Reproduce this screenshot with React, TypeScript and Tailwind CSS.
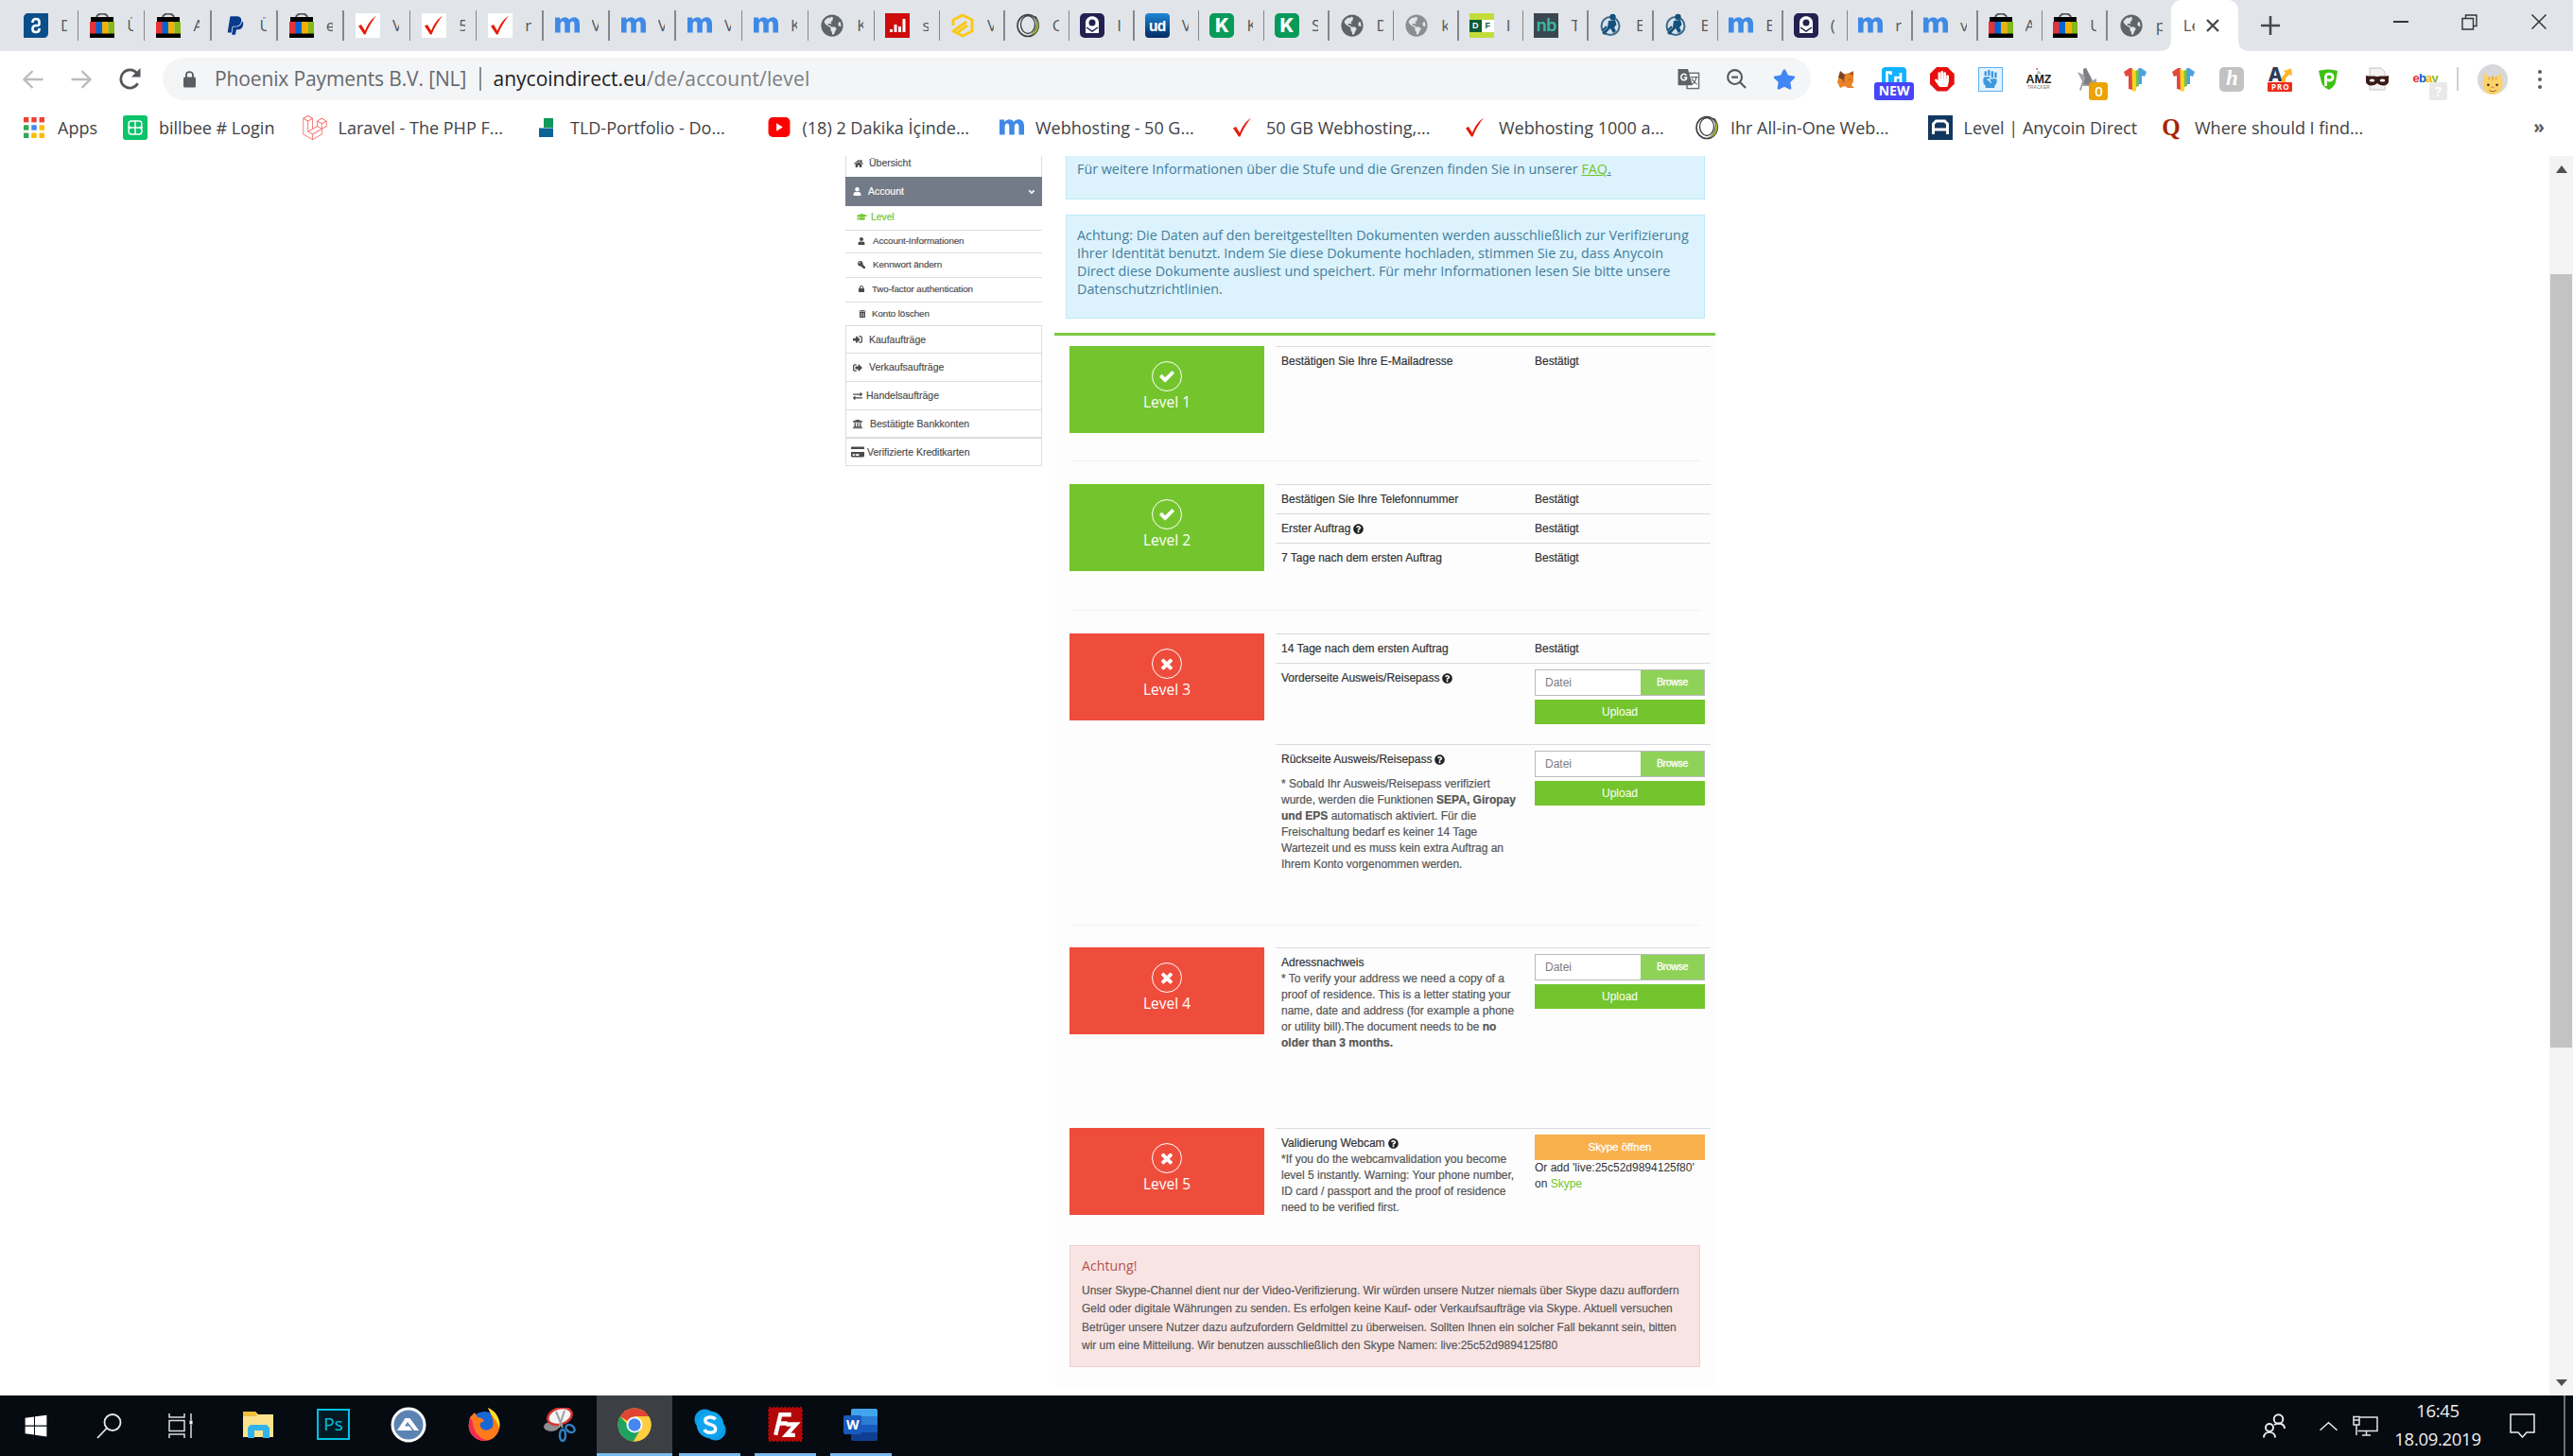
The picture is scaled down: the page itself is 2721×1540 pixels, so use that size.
import React from "react";
import {
  FaLaravel,
  FaPaypal,
  FaHome,
  FaUser,
  FaGraduationCap,
  FaKey,
  FaLock,
  FaTrashAlt,
  FaUniversity,
  FaCreditCard,
  FaExchangeAlt,
  FaSignInAlt,
  FaSignOutAlt,
  FaQuestionCircle,
  FaAngleDown,
  FaStar,
  FaHandPaper,
  FaGlobeAmericas,
  FaWindows,
  FaFistRaised,
} from "react-icons/fa";

type Kids = { children?: React.ReactNode };

/* ---------- small site logos ---------- */

const Ebay = () => (
  <svg viewBox="0 0 26 26" className="h-[26px] w-[26px]">
    <path d="M7 5C7 -1 19 -1 19 5" fill="none" stroke="#555" strokeWidth="2" />
    <rect x="1" y="4" width="24" height="6" fill="#000" />
    <rect x="0" y="9" width="7" height="13" fill="#e53238" />
    <rect x="6.500" y="9" width="6.500" height="13" fill="#0064d2" />
    <rect x="13" y="9" width="6.500" height="13" fill="#f5af02" />
    <rect x="19.500" y="9" width="6.500" height="13" fill="#86b817" />
    <rect x="0" y="21.500" width="26" height="4.500" fill="#000" />
  </svg>
);

const Tick = ({ boxed = false }: { boxed?: boolean }) => (
  <svg viewBox="0 0 26 26" className="h-[26px] w-[26px]">
    {boxed && <rect width="26" height="26" fill="#fff" />}
    <path d="M3 13.500L6 12L10 18.500C13 11 17 6 22 2.500C17 9 13 16 10.500 22.500H9Z" fill="#e51c0a" />
  </svg>
);

const LetterM = () => (
  <svg viewBox="0 0 26 26" className="h-[26px] w-[26px]">
    <path
      d="M0 4.500H5L5.500 7C8 3 13.500 3.500 15 7C18 2.500 26 3 26 11V20.500H20.500V12C20.500 7 15.800 7.500 15.800 12V20.500H10.300V12C10.300 7 5.600 7.500 5.600 12V20.500H0Z"
      fill="#3f8ae6"
    />
  </svg>
);

const Globe = ({ light = false }: { light?: boolean }) => (
  <span className={light ? "text-[#8c8f92]" : "text-[#5f6469]"}>
    <FaGlobeAmericas className="h-[24px] w-[24px]" />
  </span>
);

const Two = () => (
  <svg viewBox="0 0 26 26" className="h-[26px] w-[26px]">
    <path d="M5 0H26V21C26 24 24 26 21 26H0V5C0 2 2 0 5 0Z" fill="#0b4f8a" />
    <path
      d="M9.500 10V9C9.500 5 16.500 5 16.500 9V11C16.500 13.500 14.500 13 13 13C11 13 9.500 14 9.500 16V17C9.500 21 16.500 21 16.500 17V16"
      fill="none"
      stroke="#fff"
      strokeWidth="2.600"
    />
  </svg>
);

const Bars = () => (
  <svg viewBox="0 0 26 26" className="h-[26px] w-[26px]">
    <rect width="26" height="26" fill="#cf0a0a" />
    <path d="M6.500 20V17M11 20V12M15.500 20V14M20 20V6" stroke="#fff" strokeWidth="3" />
  </svg>
);

const Hex = () => (
  <svg viewBox="0 0 26 26" className="h-[26px] w-[26px]">
    <path
      d="M3 13V7L13 2L23 7V19L13 24L3 19L17 9M8 20L18 13"
      fill="none"
      stroke="#fbc916"
      strokeWidth="3"
      strokeLinejoin="round"
    />
  </svg>
);

const Ring = () => (
  <svg viewBox="0 0 26 26" className="h-[26px] w-[26px]">
    <ellipse cx="13" cy="13" rx="11" ry="11.500" fill="none" stroke="#3c4043" strokeWidth="1.600" />
    <path d="M21 3C28 12 24 23 14 24.500C22 20 24 12 21 3Z" fill="#a8c81c" stroke="#3c4043" strokeWidth="0.800" />
    <ellipse cx="13" cy="12" rx="7.500" ry="9.500" fill="none" stroke="#3c4043" strokeWidth="1.300" />
  </svg>
);

const Tag = () => (
  <svg viewBox="0 0 26 26" className="h-[26px] w-[26px]">
    <rect width="26" height="26" rx="5" fill="#232150" />
    <path d="M6 10C6 1 20 1 20 10V21H6Z" fill="#fff" />
    <circle cx="13" cy="10" r="3.500" fill="#232150" />
    <path d="M7 15L13 19L19 15" fill="none" stroke="#232150" strokeWidth="1.500" />
  </svg>
);

const Ud = () => (
  <span className="flex h-[26px] w-[26px] items-center justify-center rounded-[4px] bg-linear-to-b from-[#1e88d8] to-[#052c62] font-['Inter',sans-serif] text-[15px] font-bold leading-none tracking-[-0.5px] text-white">
    ud
  </span>
);

const LetterK = () => (
  <span className="flex h-[26px] w-[26px] items-center justify-center rounded-[5px] bg-[#079a59] font-['Inter',sans-serif] text-[20px] font-extrabold leading-none text-white">
    K
  </span>
);

const Df = () => (
  <span className="flex h-[26px] w-[26px] items-center bg-[#c3dc3c] font-['Liberation_Sans',sans-serif] text-[9px] font-bold leading-none">
    <span className="flex h-[13px] w-[13px] items-center justify-center bg-[#0b5b35] text-white">D</span>
    <span className="flex h-[13px] w-[13px] items-center justify-center bg-white text-[#0b5b35]">F</span>
  </span>
);

const Nb = () => (
  <span className="flex h-[26px] w-[26px] items-center justify-center bg-[#3a4752] font-['Inter',sans-serif] text-[18px] font-semibold leading-none tracking-[-0.5px] text-[#3bb8a0]">
    nb
  </span>
);

const Figure = () => (
  <svg viewBox="0 0 26 26" className="h-[26px] w-[26px]">
    <circle cx="12" cy="13.500" r="9.500" fill="#d7e0e8" stroke="#3c6a8c" strokeWidth="2" />
    <circle cx="14.500" cy="4" r="3.200" fill="#14507c" />
    <path d="M10 8L17 7L18.500 12L16 15L18 19L15 21L12 16L9 19L6 23L3 21L9 15Z" fill="#14507c" />
    <path d="M4 18L8 14" stroke="#14507c" strokeWidth="2" />
  </svg>
);

const Paypal = () => <FaPaypal className="h-[22px] w-[22px] text-[#0a3a8c]" />;

/* ---------- tab strip ---------- */

type TabInfo = [React.ReactNode, string];

const wideTabs: TabInfo[] = [
  [<Two />, "D"],
  [<Ebay />, "Ü"],
  [<Ebay />, "A"],
  [<Paypal />, "Ü"],
  [<Ebay />, "e"],
  [<Tick boxed />, "V"],
  [<Tick boxed />, "5"],
  [<Tick boxed />, "n"],
  [<LetterM />, "V"],
  [<LetterM />, "V"],
  [<LetterM />, "V"],
  [<LetterM />, "K"],
  [<Globe />, "K"],
];

const narrowTabs: TabInfo[] = [
  [<Bars />, "s"],
  [<Hex />, "V"],
  [<Ring />, "C"],
  [<Tag />, "I"],
  [<Ud />, "V"],
  [<LetterK />, "K"],
  [<LetterK />, "S"],
  [<Globe />, "D"],
  [<Globe light />, "k"],
  [<Df />, "I"],
  [<Nb />, "T"],
  [<Figure />, "E"],
  [<Figure />, "E"],
  [<LetterM />, "E"],
  [<Tag />, "("],
  [<LetterM />, "r"],
  [<LetterM />, "v"],
  [<Ebay />, "A"],
  [<Ebay />, "U"],
];

const TabBody = ({ info }: { info: TabInfo }) => (
  <>
    <span className="flex w-[26px] shrink-0 items-center justify-center">{info[0]}</span>
    <span className="ml-[13px] w-[7px] overflow-hidden text-[17px] leading-[24px] text-[#55585c]">{info[1]}</span>
  </>
);

const TabStrip = () => (
  <div className="flex h-[54px] bg-[#e1e5ea] pl-[13px]">
    {wideTabs.map((t, i) => (
      <div key={i} className="flex w-[70.200px] shrink-0 items-center pl-[12px]">
        <TabBody info={t} />
        <span className="ml-auto h-[32px] w-[1.500px] bg-[#85888c]" />
      </div>
    ))}
    {narrowTabs.map((t, i) => (
      <div key={i} className="flex w-[68.600px] shrink-0 items-center pl-[11px]">
        <TabBody info={t} />
        <span className="ml-auto h-[32px] w-[1.500px] bg-[#85888c]" />
      </div>
    ))}
    <div className="flex w-[67px] shrink-0 items-center pl-[12px]">
      <TabBody info={[<Globe />, "p"]} />
    </div>
    <div className="relative flex w-[71px] shrink-0 items-center rounded-t-[11px] bg-white pl-[13px]">
      <svg viewBox="0 0 12 12" className="absolute bottom-0 -left-[12px] h-[12px] w-[12px]">
        <path d="M0 12C8 12 12 8 12 0V12Z" fill="#fff" />
      </svg>
      <svg viewBox="0 0 12 12" className="absolute -right-[12px] bottom-0 h-[12px] w-[12px]">
        <path d="M12 12C4 12 0 8 0 0V12Z" fill="#fff" />
      </svg>
      <span className="w-[12px] overflow-hidden text-[17px] leading-[24px] text-[#55585c]">Le</span>
      <svg viewBox="0 0 14 14" className="ml-[12px] h-[14px] w-[14px]">
        <path d="M1 1L13 13M13 1L1 13" stroke="#46494d" strokeWidth="2.400" />
      </svg>
    </div>
    <svg viewBox="0 0 20 20" className="ml-[24px] h-[20px] w-[20px] self-center">
      <path d="M10 0V20M0 10H20" stroke="#46494d" strokeWidth="2.600" />
    </svg>
    <div className="ml-auto flex h-[46px] w-[219px] items-center">
      <span className="flex w-[73px] justify-center">
        <span className="h-[2px] w-[16px] bg-[#333]" />
      </span>
      <span className="flex w-[73px] justify-center">
        <svg viewBox="0 0 17 17" className="h-[17px] w-[17px]">
          <path d="M1 4.500H12.500V16H1ZM4.500 4V1H16V12.500H13" fill="none" stroke="#333" strokeWidth="1.400" />
        </svg>
      </span>
      <span className="flex w-[73px] justify-center">
        <svg viewBox="0 0 16 16" className="h-[16px] w-[16px]">
          <path d="M0.500 0.500L15.500 15.500M15.500 0.500L0.500 15.500" stroke="#333" strokeWidth="1.500" />
        </svg>
      </span>
    </div>
  </div>
);

/* ---------- toolbar ---------- */

const Arrow = ({ flip = false }: { flip?: boolean }) => (
  <svg viewBox="0 0 22 20" className={flip ? "h-[20px] w-[22px] rotate-180" : "h-[20px] w-[22px]"}>
    <path d="M21.500 10H2M10.500 1L1.500 10L10.500 19" fill="none" stroke="#babcbe" strokeWidth="2.400" />
  </svg>
);

const Shirt = () => (
  <svg viewBox="0 0 24 26" className="h-[26px] w-[24px]">
    <path d="M0 5L6 1H9V15L5 13V9L2 10Z" fill="#e3483f" />
    <path d="M5 10L9 3V15L9 24L5 23Z" fill="#e3483f" />
    <path d="M8.500 2L13 4V25.500H9Z" fill="#fbd81c" />
    <path d="M12.500 4L16 2V20L13 21Z" fill="#7cc142" />
    <path d="M15.500 1H18L24 5L22 10L19 9V18H15.500Z" fill="#4aa3df" />
  </svg>
);

const Slot = ({ children }: Kids) => (
  <div className="relative flex h-[46px] w-[51.100px] shrink-0 items-center justify-center">{children}</div>
);

const Extensions = () => (
  <div className="flex items-center">
    <Slot>
      <svg viewBox="0 0 18 20" className="h-[20px] w-[18px]">
        <path d="M2 6L9 4L17 2V12L15 16L18 19H11L8 17L3 19L0 13Z" fill="#ea8227" />
        <path d="M3 1L8 5L7 11L1 8Z" fill="#7a4525" />
        <path d="M12 4L17 1V6Z" fill="#a8561c" />
        <path d="M5 12H8M12 10H14" stroke="#9a4d14" strokeWidth="1.200" />
      </svg>
    </Slot>
    <Slot>
      <svg viewBox="0 0 26 26" className="h-[26px] w-[26px]">
        <rect width="26" height="24" rx="4" fill="#12b2ff" />
        <path d="M5.500 18V5.500H9.500V8M14.500 18V11H19M20 18V6" fill="none" stroke="#fff" strokeWidth="2.600" />
      </svg>
      <span className="absolute top-[26px] left-[5px] flex h-[19px] w-[42px] items-center justify-center rounded-[3px] bg-[#4745f7] text-[14px] font-bold leading-none text-white">
        NEW
      </span>
    </Slot>
    <Slot>
      <span className="flex h-[26px] w-[26px] items-center justify-center bg-[#e60f0f] [clip-path:polygon(30%_0,70%_0,100%_30%,100%_70%,70%_100%,30%_100%,0_70%,0_30%)]">
        <FaHandPaper className="h-[17px] w-[17px] text-white" />
      </span>
    </Slot>
    <Slot>
      <span className="flex h-[26px] w-[26px] items-center justify-center border-[1.500px] border-[#5eb0ef] bg-[#e3f2fd]">
        <FaFistRaised className="h-[19px] w-[17px] -scale-x-100 text-[#3d97dd]" />
      </span>
    </Slot>
    <Slot>
      <span className="flex flex-col items-center font-['Liberation_Sans',sans-serif] leading-none">
        <svg viewBox="0 0 8 8" className="h-[7px] w-[8px]">
          <path d="M1 7L3 3L5 4L7 7Z" fill="#bbb" />
          <rect x="1" y="0" width="2" height="2" fill="#e05a5a" />
        </svg>
        <span className="text-[12.500px] font-bold leading-[11px] text-[#222]">AMZ</span>
        <span className="text-[5px] leading-[5px] text-[#777]">TRACKER</span>
      </span>
    </Slot>
    <Slot>
      <svg viewBox="0 0 26 26" className="h-[26px] w-[26px]">
        <path d="M3 5L9 8V2L12 1L19 14L23 12V16L15 20L8 20L7 25L5 24L8 15Z" fill="#a2a4a6" />
        <path d="M9 2L12 1L18 13L16 19L9 18L11 12Z" fill="#7d7f82" />
      </svg>
      <span className="absolute top-[26px] left-[28px] flex h-[19px] w-[20px] items-center justify-center rounded-[3px] bg-[#eba304] text-[15px] font-semibold leading-none text-white">
        0
      </span>
    </Slot>
    <Slot>
      <Shirt />
    </Slot>
    <Slot>
      <Shirt />
    </Slot>
    <Slot>
      <span className="flex h-[26px] w-[26px] items-center justify-center rounded-[5px] bg-[#c2c2c2] pb-[2px] font-['Liberation_Serif',serif] text-[23px] font-bold italic leading-none text-white">
        h
      </span>
    </Slot>
    <Slot>
      <span className="relative flex h-[26px] w-[26px] flex-col">
        <span className="h-[16px] font-['Inter',sans-serif] text-[20px] font-extrabold leading-[17px] text-[#2b3a57]">A</span>
        <span className="flex h-[10px] items-center justify-center rounded-[1px] bg-[#ef2b1c] pl-[1px] text-[8px] font-bold leading-none tracking-[1px] text-white">
          PRO
        </span>
        <svg viewBox="0 0 12 16" className="absolute top-0 right-0 h-[16px] w-[12px]">
          <path d="M1 16V11L5 6L3 4L11 1.500L12 9L9 8L5 12V16Z" fill="#fbb62b" />
        </svg>
      </span>
    </Slot>
    <Slot>
      <svg viewBox="0 0 20 22" className="h-[22px] w-[20px]">
        <path d="M0 2C7 0 13 0 20 2L18 14C17 18 14 20 11 22C7 20 4 18 3 14Z" fill="#3fc113" />
        <path d="M7.500 18V8C7.500 4 15 4 15 8.500C15 12 11 13 9 11" fill="none" stroke="#fff" strokeWidth="2.800" />
      </svg>
    </Slot>
    <Slot>
      <svg viewBox="0 0 24 26" className="h-[26px] w-[24px]">
        <path d="M4 1H16L20 5V24H4Z" fill="#f3f3f3" stroke="#c4c4c4" strokeWidth="1" />
        <path d="M0 9C4 10 8 9 12 10C16 9 20 10 24 9V16C22 21 15 20 12 17C9 20 2 21 0 16Z" fill="#3a1a17" />
        <ellipse cx="6.500" cy="14" rx="2.800" ry="1.500" fill="#fff" />
        <ellipse cx="17.500" cy="14" rx="2.800" ry="1.500" fill="#fff" />
      </svg>
    </Slot>
    <Slot>
      <span className="flex pb-[2px] font-['Liberation_Sans',sans-serif] text-[13px] font-bold leading-none tracking-[-0.8px]">
        <span className="text-[#e53238]">e</span>
        <span className="text-[#0064d2]">b</span>
        <span className="text-[#f5af02]">a</span>
        <span className="text-[#86b817]">y</span>
      </span>
      <span className="absolute top-[26px] left-[30px] flex h-[19px] w-[19px] items-center justify-center rounded-[3px] bg-[#e9e9e9] text-[15px] font-bold leading-none text-white">
        ?
      </span>
    </Slot>
  </div>
);

const Toolbar = () => (
  <div className="flex h-[59px] items-center bg-white">
    <div className="flex w-[172px] items-center gap-[29px] pl-[24px]">
      <Arrow />
      <Arrow flip />
      <svg viewBox="0 0 24 24" className="h-[23px] w-[23px]">
        <path d="M20.500 17A10 10 0 1 1 19.500 5.500" fill="none" stroke="#53575b" strokeWidth="2.800" />
        <path d="M23.500 0V10H13.500Z" fill="#53575b" />
      </svg>
    </div>
    <div className="flex h-[45px] w-[1743px] items-center rounded-full bg-[#f4f5f6] pl-[22px] text-[21px]">
      <svg viewBox="0 0 13 18" className="h-[18px] w-[13px]">
        <rect y="6.500" width="13" height="11" rx="1.500" fill="#5a5e63" />
        <path d="M3 7V4.500C3 0 10 0 10 4.500V7" fill="none" stroke="#5a5e63" strokeWidth="1.900" />
      </svg>
      <span className="ml-[20px] w-[280px] whitespace-nowrap tracking-[-0.130px] text-[#65696e]">Phoenix Payments B.V. [NL]</span>
      <span className="h-[25px] w-[1.500px] bg-[#8b8e92]" />
      <span className="ml-[13px] whitespace-nowrap text-[#202124]">anycoindirect.eu</span>
      <span className="whitespace-nowrap tracking-[0.150px] text-[#7a7e83]">/de/account/level</span>
      <span className="mr-[16px] ml-auto flex items-center gap-[28px]">
        <svg viewBox="0 0 24 24" className="h-[23px] w-[24px]">
          <rect x="10" y="5.500" width="13" height="17" fill="#fff" stroke="#6b6f74" strokeWidth="1.500" />
          <path d="M0 1H11L16 19H1C0 19 0 18 0 18Z" fill="#5f6368" />
          <path d="M9.500 8C7 5 3 7 3.500 10.500C4 14.500 9.500 14 9.500 10.500H6.500" fill="none" stroke="#fff" strokeWidth="1.600" />
          <path d="M14 10H22M20 10C20 14 17 17 15 18M15 12C17 14 19 17 21 18" fill="none" stroke="#5f6368" strokeWidth="1.300" />
        </svg>
        <svg viewBox="0 0 22 22" className="h-[21px] w-[21px]">
          <circle cx="9" cy="9" r="7.800" fill="none" stroke="#55595d" strokeWidth="2.200" />
          <path d="M5.500 9H12.500M14.500 14.500L21 21" stroke="#55595d" strokeWidth="2.200" />
        </svg>
        <FaStar className="h-[22px] w-[24px] text-[#4086f4]" />
      </span>
    </div>
    <div className="ml-[11px]">
      <Extensions />
    </div>
    <span className="ml-[8px] h-[25px] w-[1.500px] bg-[#cfd1d4]" />
    <div className="ml-[20px] flex h-[32px] w-[32px] items-end justify-center rounded-full bg-[#d6d8db]">
      <svg viewBox="0 0 28 26" className="h-[24px] w-[26px]">
        <path d="M3 10L4 1L10 6H18L24 1L25 10C27 20 21 26 14 26C7 26 1 20 3 10Z" fill="#fbd36b" />
        <path d="M14 5V10M10 6V9M18 6V9" stroke="#e89a3c" strokeWidth="1.500" />
        <circle cx="9" cy="15" r="1.500" fill="#4a3424" />
        <circle cx="19" cy="15" r="1.500" fill="#4a3424" />
        <path d="M12 17H16L14 19Z" fill="#e86a4a" />
        <path d="M10 21C12 23 16 23 18 21" fill="none" stroke="#8a5a2c" strokeWidth="1" />
      </svg>
    </div>
    <div className="ml-[32px] flex flex-col gap-[4px]">
      <span className="h-[4px] w-[4px] rounded-full bg-[#5a5e63]" />
      <span className="h-[4px] w-[4px] rounded-full bg-[#5a5e63]" />
      <span className="h-[4px] w-[4px] rounded-full bg-[#5a5e63]" />
    </div>
  </div>
);

/* ---------- bookmarks ---------- */

const Bookmark = ({ icon, width, children }: Kids & { icon: React.ReactNode; width: string }) => (
  <div className={`flex shrink-0 items-center ${width}`}>
    <span className="flex w-[26px] justify-center">{icon}</span>
    <span className="ml-[12px] whitespace-nowrap text-[18px] leading-none text-[#3f4246]">{children}</span>
  </div>
);

const appDots = ["#ea4335", "#ea4335", "#ea4335", "#34a853", "#4285f4", "#fbbc05", "#34a853", "#fbbc05", "#fbbc05"];

const Bookmarks = () => (
  <div className="flex h-[52px] items-center bg-white pb-[9px] pl-[23px]">
    <Bookmark
      width="w-[107px]"
      icon={
        <svg viewBox="0 0 22 22" className="h-[22px] w-[22px]">
          {appDots.map((c, i) => (
            <rect key={i} x={(i % 3) * 8.3} y={Math.floor(i / 3) * 8.3} width="5.400" height="5.400" fill={c} />
          ))}
        </svg>
      }
    >
      Apps
    </Bookmark>
    <Bookmark
      width="w-[189.500px]"
      icon={
        <svg viewBox="0 0 26 26" className="h-[26px] w-[26px]">
          <rect width="26" height="26" rx="3" fill="#0bc36a" />
          <path
            d="M13 6V20M5 13H21M13 6H9C5 6 5 13 9 13C5 13 5 20 9 20H17C21 20 21 13 17 13C21 13 21 6 17 6Z"
            fill="none"
            stroke="#fff"
            strokeWidth="1.500"
          />
        </svg>
      }
    >
      billbee # Login
    </Bookmark>
    <Bookmark width="w-[245.500px]" icon={<FaLaravel className="h-[26px] w-[26px] text-[#f4645f]" />}>
      Laravel - The PHP F...
    </Bookmark>
    <Bookmark
      width="w-[245.500px]"
      icon={
        <svg viewBox="0 0 16 20" className="h-[20px] w-[16px]">
          <rect x="5" width="10" height="10" fill="#12985a" />
          <rect y="10.500" width="15" height="9.500" fill="#0a6496" />
        </svg>
      }
    >
      TLD-Portfolio - Do...
    </Bookmark>
    <Bookmark
      width="w-[246.500px]"
      icon={
        <svg viewBox="0 0 24 22" className="h-[21px] w-[24px]">
          <rect width="24" height="22" rx="5" fill="#f00" />
          <path d="M9 6.500L16 11L9 15.500Z" fill="#fff" />
        </svg>
      }
    >
      (18) 2 Dakika İçinde...
    </Bookmark>
    <Bookmark width="w-[244px]" icon={<LetterM />}>
      Webhosting - 50 G...
    </Bookmark>
    <Bookmark width="w-[246px]" icon={<Tick />}>
      50 GB Webhosting,...
    </Bookmark>
    <Bookmark width="w-[245px]" icon={<Tick />}>
      Webhosting 1000 a...
    </Bookmark>
    <Bookmark width="w-[246.500px]" icon={<Ring />}>
      Ihr All-in-One Web...
    </Bookmark>
    <Bookmark
      width="w-[244.500px]"
      icon={
        <svg viewBox="0 0 26 26" className="h-[26px] w-[26px]">
          <rect width="26" height="26" fill="#12375f" />
          <path d="M5.500 20V9L8.500 6H17.500L20.500 9V20M5 15H21" fill="none" stroke="#fff" strokeWidth="3" />
        </svg>
      }
    >
      Level | Anycoin Direct
    </Bookmark>
    <Bookmark
      width="w-[240px]"
      icon={<span className="font-['Liberation_Serif',serif] text-[25px] font-bold leading-none text-[#a82400]">Q</span>}
    >
      Where should I find...
    </Bookmark>
    <span className="mr-[30px] ml-auto text-[19px] font-bold leading-none text-[#5a5e63]">»</span>
  </div>
);

/* ---------- account sidebar ---------- */

const SideRow = ({ icon, className, children }: Kids & { icon: React.ReactNode; className: string }) => (
  <div className={`flex items-center whitespace-nowrap leading-none ${className}`}>
    {icon}
    <span>{children}</span>
  </div>
);

const Sidebar = () => (
  <div className="w-[208px] shrink-0 font-['Liberation_Sans',sans-serif] text-[10.500px] text-[#4a4a4a] [-webkit-text-stroke:0.150px_currentColor]">
    <SideRow className="h-[22px] gap-[6px] border-x border-[#dcdcdc] pb-[7px] pl-[8px]" icon={<FaHome className="h-[10px] w-[10px]" />}>
      Übersicht
    </SideRow>
    <div className="flex h-[31px] items-center bg-[#747b88] pr-[6px] pl-[8px] text-white">
      <FaUser className="h-[9px] w-[9px]" />
      <span className="ml-[7px] leading-none">Account</span>
      <FaAngleDown className="ml-auto h-[10px] w-[10px]" />
    </div>
    <div className="text-[9.800px] tracking-[-0.1px]">
      <SideRow
        className="h-[26px] gap-[4px] border-b border-[#dcdcdc] pb-[2px] pl-[12px] text-[10.500px] text-[#71c62c]"
        icon={<FaGraduationCap className="h-[11px] w-[11px]" />}
      >
        Level
      </SideRow>
      <SideRow className="h-[24px] gap-[8px] border-b border-[#dcdcdc] pb-[1px] pl-[13px]" icon={<FaUser className="h-[8px] w-[8px]" />}>
        Account-Informationen
      </SideRow>
      <SideRow className="h-[26px] gap-[8px] border-b border-[#dcdcdc] pb-[1px] pl-[13px]" icon={<FaKey className="h-[8px] w-[8px] -scale-x-100" />}>
        Kennwort ändern
      </SideRow>
      <SideRow className="h-[26px] gap-[7px] border-b border-[#dcdcdc] pb-[2px] pl-[13px]" icon={<FaLock className="h-[7px] w-[8px]" />}>
        Two-factor authentication
      </SideRow>
      <SideRow className="h-[24px] gap-[6px] pb-[1px] pl-[14px]" icon={<FaTrashAlt className="h-[8px] w-[8px]" />}>
        Konto löschen
      </SideRow>
    </div>
    <div className="border border-[#dcdcdc]">
      <SideRow className="h-[29px] gap-[7px] border-b border-[#dcdcdc] pl-[7px]" icon={<FaSignInAlt className="h-[10px] w-[10px]" />}>
        Kaufaufträge
      </SideRow>
      <SideRow className="h-[30px] gap-[7px] border-b border-[#dcdcdc] pl-[7px]" icon={<FaSignOutAlt className="h-[10px] w-[10px]" />}>
        Verkaufsaufträge
      </SideRow>
      <SideRow className="h-[30px] gap-[4px] border-b border-[#dcdcdc] pl-[7px]" icon={<FaExchangeAlt className="h-[10px] w-[10px]" />}>
        Handelsaufträge
      </SideRow>
      <SideRow className="h-[30px] gap-[7px] border-b-2 border-[#dcdcdc] pl-[6px]" icon={<FaUniversity className="h-[11px] w-[12px]" />}>
        Bestätigte Bankkonten
      </SideRow>
      <SideRow className="h-[28px] gap-[3px] pl-[5px]" icon={<FaCreditCard className="h-[14px] w-[14px]" />}>
        Verifizierte Kreditkarten
      </SideRow>
    </div>
  </div>
);

/* ---------- verification levels ---------- */

const BadgeTick = () => (
  <svg viewBox="0 0 1792 1792" className="h-[18px] w-[18px]">
    <path
      d="M1671 566q0 40-28 68l-724 724-136 136q-28 28-68 28t-68-28l-136-136-362-362q-28-28-28-68t28-68l136-136q28-28 68-28t68 28l294 295 656-657q28-28 68-28t68 28l136 136q28 28 28 68z"
      fill="#fff"
    />
  </svg>
);

const BadgeCross = () => (
  <svg viewBox="0 0 1792 1792" className="h-[18px] w-[18px]">
    <path
      d="M1490 1322q0 40-28 68l-136 136q-28 28-68 28t-68-28l-294-294-294 294q-28 28-68 28t-68-28l-136-136q-28-28-28-68t28-68l294-294-294-294q-28-28-28-68t28-68l136-136q28-28 68-28t68 28l294 294 294-294q28-28 68-28t68 28l136 136q28 28 28 68t-28 68l-294 294 294 294q28 28 28 68z"
      fill="#fff"
    />
  </svg>
);

const LevelBadge = ({ level, ok = false }: { level: number; ok?: boolean }) => (
  <div className={`flex h-[92px] w-[206px] shrink-0 flex-col items-center pt-[16px] text-white ${ok ? "bg-[#74c52d]" : "bg-[#ef4d3c]"}`}>
    <span className="flex h-[32px] w-[32px] items-center justify-center rounded-full border-[1.500px] border-white">
      {ok ? <BadgeTick /> : <BadgeCross />}
    </span>
    <span className="mt-[1px] font-['Open_Sans',sans-serif] text-[15.500px] leading-[20px]">Level {level}</span>
  </div>
);

const Level = ({ level, ok, height, children }: Kids & { level: number; ok?: boolean; height: string }) => (
  <section className={`flex pl-[16px] ${height}`}>
    <LevelBadge level={level} ok={ok} />
    <div className="ml-[12px] w-[460px]">{children}</div>
  </section>
);

const Row = ({ height, left, children }: Kids & { height: string; left: React.ReactNode }) => (
  <div className={`flex border-t border-[#d9dadb] pl-[6px] ${height}`}>
    <div className="w-[268px] shrink-0 whitespace-nowrap pt-[7px] leading-[17px] [-webkit-text-stroke:0.200px_currentColor]">{left}</div>
    <div className="w-[180px]">{children}</div>
  </div>
);

const Confirmed = () => <div className="pt-[7px] leading-[17px] [-webkit-text-stroke:0.200px_currentColor]">Bestätigt</div>;

const Help = () => <FaQuestionCircle className="mb-[1px] ml-[3px] inline h-[11px] w-[11px] text-[#222]" />;

const Note = ({ className = "", lines }: { className?: string; lines: React.ReactNode[] }) => (
  <div className={`leading-[17.100px] text-[#555] ${className}`}>
    {lines.map((l, i) => (
      <div key={i}>{l}</div>
    ))}
  </div>
);

const Upload = () => (
  <div className="pt-[6px]">
    <div className="flex h-[28px] border border-[#b9bbbd] bg-white">
      <span className="flex flex-1 items-center pl-[10px] text-[12px] text-[#7c7c7c]">Datei</span>
      <span className="flex w-[67px] items-center justify-center bg-[#8fd258] text-[10.500px] tracking-[-0.3px] text-white [-webkit-text-stroke:0.3px_white]">
        Browse
      </span>
    </div>
    <div className="mt-[4px] flex h-[26px] items-center justify-center bg-[#74c52d] text-[12px] text-white">Upload</div>
  </div>
);

const Divider = () => <hr className="ml-[16px] w-[667px] border-[#f2f2f2]" />;

const Levels = () => (
  <div className="font-['Liberation_Sans',sans-serif] text-[12px] text-[#333]">
    <div className="h-[3px] bg-[#7cc840]" />
    <div className="bg-[#fdfdfd] pt-[11px] pb-[20px]">
      <Level level={1} ok height="h-[121px]">
        <Row height="h-[31px]" left="Bestätigen Sie Ihre E-Mailadresse">
          <Confirmed />
        </Row>
      </Level>
      <Divider />
      <Level level={2} ok height="h-[157px] pt-[24px]">
        <Row height="h-[31px]" left="Bestätigen Sie Ihre Telefonnummer">
          <Confirmed />
        </Row>
        <Row
          height="h-[31px]"
          left={
            <>
              Erster Auftrag
              <Help />
            </>
          }
        >
          <Confirmed />
        </Row>
        <Row height="h-[31px]" left="7 Tage nach dem ersten Auftrag">
          <Confirmed />
        </Row>
      </Level>
      <Divider />
      <Level level={3} height="h-[332px] pt-[24px]">
        <Row height="h-[31px]" left="14 Tage nach dem ersten Auftrag">
          <Confirmed />
        </Row>
        <Row
          height="h-[86px]"
          left={
            <>
              Vorderseite Ausweis/Reisepass
              <Help />
            </>
          }
        >
          <Upload />
        </Row>
        <Row
          height="h-[149px]"
          left={
            <>
              Rückseite Ausweis/Reisepass
              <Help />
              <Note
                className="mt-[9px]"
                lines={[
                  "* Sobald Ihr Ausweis/Reisepass verifiziert",
                  <>
                    wurde, werden die Funktionen <b>SEPA, Giropay</b>
                  </>,
                  <>
                    <b>und EPS</b> automatisch aktiviert. Für die
                  </>,
                  "Freischaltung bedarf es keiner 14 Tage",
                  "Wartezeit und es muss kein extra Auftrag an",
                  "Ihrem Konto vorgenommen werden.",
                ]}
              />
            </>
          }
        >
          <Upload />
        </Row>
      </Level>
      <Divider />
      <Level level={4} height="h-[214px] pt-[23px]">
        <Row
          height="h-[120px]"
          left={
            <>
              Adressnachweis
              <Note
                lines={[
                  "* To verify your address we need a copy of a",
                  "proof of residence. This is a letter stating your",
                  "name, date and address (for example a phone",
                  <>
                    or utility bill).The document needs to be <b>no</b>
                  </>,
                  <b>older than 3 months.</b>,
                ]}
              />
            </>
          }
        >
          <Upload />
        </Row>
      </Level>
      <Level level={5} height="h-[124px]">
        <Row
          height="h-[110px]"
          left={
            <>
              Validierung Webcam
              <Help />
              <Note
                lines={[
                  "*If you do the webcamvalidation you become",
                  "level 5 instantly. Warning: Your phone number,",
                  "ID card / passport and the proof of residence",
                  "need to be verified first.",
                ]}
              />
            </>
          }
        >
          <div className="mt-[6px] flex h-[27px] items-center justify-center bg-[#f8b04c] text-[11.500px] text-white [-webkit-text-stroke:0.3px_white]">
            Skype öffnen
          </div>
          <div className="whitespace-nowrap leading-[17px]">
            Or add 'live:25c52d9894125f80'
            <br />
            on <span className="text-[#71c62c]">Skype</span>
          </div>
        </Row>
      </Level>
      <div className="ml-[16px] h-[129px] w-[667px] border border-[#f0cfd1] bg-[#f9e4e4] pt-[11px] pl-[12px]">
        <div className="font-['Open_Sans',sans-serif] text-[14.200px] leading-[20px] text-[#b5504e]">Achtung!</div>
        <div className="mt-[7px] whitespace-nowrap leading-[19.300px] tracking-[-0.020px] text-[#555] [-webkit-text-stroke:0.150px_currentColor]">
          <div>Unser Skype-Channel dient nur der Video-Verifizierung. Wir würden unsere Nutzer niemals über Skype dazu auffordern</div>
          <div>Geld oder digitale Währungen zu senden. Es erfolgen keine Kauf- oder Verkaufsaufträge via Skype. Aktuell versuchen</div>
          <div>Betrüger unsere Nutzer dazu aufzufordern Geldmittel zu überweisen. Sollten Ihnen ein solcher Fall bekannt sein, bitten</div>
          <div>wir um eine Mitteilung. Wir benutzen ausschließlich den Skype Namen: live:25c52d9894125f80</div>
        </div>
      </div>
    </div>
  </div>
);

const Alerts = () => (
  <div className="ml-[12px] w-[676px] whitespace-nowrap font-['Open_Sans',sans-serif] text-[14.330px] leading-[19.100px] text-[#447e9b]">
    <div className="h-[46px] border border-t-0 border-[#bdebf5] bg-[#dcf2fc] pt-[4px] pl-[11px]">
      Für weitere Informationen über die Stufe und die Grenzen finden Sie in unserer <span className="text-[#71c62c] underline">FAQ</span>
      <span className="underline">.</span>
    </div>
    <div className="mt-[16px] h-[110px] border border-[#bdebf5] bg-[#dcf2fc] pt-[11px] pl-[11px]">
      <div>Achtung: Die Daten auf den bereitgestellten Dokumenten werden ausschließlich zur Verifizierung</div>
      <div>Ihrer Identität benutzt. Indem Sie diese Dokumente hochladen, stimmen Sie zu, dass Anycoin</div>
      <div>Direct diese Dokumente ausliest und speichert. Für mehr Informationen lesen Sie bitte unsere</div>
      <div>Datenschutzrichtlinien.</div>
    </div>
  </div>
);

const ScrollBar = () => (
  <div className="ml-auto flex h-full w-[25px] flex-col items-center bg-[#f3f3f3]">
    <svg viewBox="0 0 12 8" className="mt-[10px] h-[8px] w-[12px]">
      <path d="M0 8L6 0L12 8Z" fill="#505050" />
    </svg>
    <div className="mt-[107px] h-[818px] w-[23px] bg-[#c3c3c3]" />
    <svg viewBox="0 0 12 7" className="mt-auto mb-[10px] h-[7px] w-[12px]">
      <path d="M0 0H12L6 7Z" fill="#505050" />
    </svg>
  </div>
);

/* ---------- taskbar ---------- */

const Task = ({ children, open = false, active = false }: Kids & { open?: boolean; active?: boolean }) => (
  <div className={`flex h-full w-[79.700px] shrink-0 flex-col items-center ${active ? "bg-[#3c4044]" : ""}`}>
    <div className="flex flex-1 items-center">{children}</div>
    <span className={`h-[3px] ${active ? "w-full bg-[#76b9ed]" : open ? "w-[65px] bg-[#76b9ed]" : "w-0"}`} />
  </div>
);

const Taskbar = () => (
  <div className="flex h-[64px] items-center bg-[#060b12]">
    <div className="flex h-full w-[233px] items-center pl-[25px]">
      <FaWindows className="h-[26px] w-[26px] text-white" />
      <svg viewBox="0 0 27 27" className="ml-[51px] h-[27px] w-[27px]">
        <circle cx="17" cy="9.500" r="8.500" fill="none" stroke="#e8e8e8" strokeWidth="1.800" />
        <path d="M11 15.500L1 26" stroke="#e8e8e8" strokeWidth="1.800" />
      </svg>
      <svg viewBox="0 0 26 26" className="ml-[49px] h-[26px] w-[26px]">
        <path d="M1 0V4H17V0M1 26V22H17V26M1 7.500H17V18.500H1ZM24 0V7M24 12V26" fill="none" stroke="#ddd" strokeWidth="1.500" />
        <rect x="22.500" y="7.500" width="3" height="4" fill="#fff" />
      </svg>
    </div>
    <Task>
      <svg viewBox="0 0 34 28" className="h-[28px] w-[34px]">
        <path d="M1 0H14L17 3H33V27H1Z" fill="#fbe38d" />
        <path d="M1 0H14L16 5H1Z" fill="#eec03c" />
        <path d="M6 28V17L9 14H26L29 17V28H22V20H13V28Z" fill="#31b4ec" />
      </svg>
    </Task>
    <Task>
      <span className="flex h-[33px] w-[35px] items-center justify-center border-[2px] border-[#00c4e4] bg-[#021a24] text-[19px] leading-none text-[#00c4e4]">
        Ps
      </span>
    </Task>
    <Task>
      <svg viewBox="0 0 38 38" className="h-[38px] w-[38px]">
        <circle cx="19" cy="19" r="17" fill="#5c84b3" stroke="#fff" strokeWidth="3" />
        <path d="M7 25L15.500 12H20.500L30 25H25L18 16L15 20.500H20L23 25Z" fill="#fff" />
      </svg>
    </Task>
    <Task>
      <svg viewBox="0 0 36 36" className="h-[36px] w-[36px]">
        <circle cx="18" cy="18" r="14" fill="#1767d4" />
        <path
          d="M3 10L8 5L11 10C14 10 17 12 18 14L14 16C12 23 22 27 27 20C29 13 25 8 22 0C31 4 36 13 34 22C32 31 25 35 18 35C7 35 0 25 2 16Z"
          fill="#ff7a1a"
        />
        <path d="M22 0C31 4 36 13 34 22C33 15 27 11 22 0Z" fill="#ffe226" />
        <path d="M2 16L3 10L6 15C6 25 13 33 22 34.500C9 37 0 26 2 16Z" fill="#f5285a" />
      </svg>
    </Task>
    <Task>
      <svg viewBox="0 0 36 36" className="h-[36px] w-[36px]">
        <ellipse cx="9" cy="20" rx="8" ry="5" fill="#8d8f92" />
        <ellipse cx="18" cy="9" rx="13" ry="8.500" fill="#f5f5f5" stroke="#d8352f" strokeWidth="2.500" transform="rotate(-18 18 9)" />
        <path d="M14 4L21 21M23 3L17 21" stroke="#9da0a3" strokeWidth="2" />
        <ellipse cx="29" cy="22" rx="5" ry="3.500" fill="none" stroke="#2f7fc0" strokeWidth="2.500" transform="rotate(35 29 22)" />
        <ellipse cx="21" cy="29" rx="3" ry="6" fill="none" stroke="#2f7fc0" strokeWidth="2.500" />
      </svg>
    </Task>
    <Task active>
      <svg viewBox="0 0 36 36" className="h-[36px] w-[36px]">
        <circle cx="18" cy="18" r="17.500" fill="#ffcd40" />
        <path d="M18 18L2.800 9.300A17.500 17.500 0 0 1 33.200 9.300H18Z" fill="#e14435" />
        <path d="M2.800 9.300A17.500 17.500 0 0 0 17 35.500L25 22L18 18H11Z" fill="#1da261" />
        <path d="M33.200 9.300A17.500 17.500 0 0 1 17 35.500L25.500 21L18 10V9.300Z" fill="#ffcd40" />
        <circle cx="18" cy="18" r="8.500" fill="#fff" />
        <circle cx="18" cy="18" r="6.700" fill="#4688f1" />
      </svg>
    </Task>
    <Task open>
      <svg viewBox="0 0 36 36" className="h-[34px] w-[34px]">
        <circle cx="12" cy="12" r="11.500" fill="#0d9be6" />
        <circle cx="24" cy="24" r="11.500" fill="#0d9be6" />
        <circle cx="18" cy="18" r="15" fill="#10a5ee" />
        <path d="M24 12C21 8 12 9 12.500 13.500C13 19 24 16 24 22.500C24 28 14 28 11.500 23.500" fill="none" stroke="#fff" strokeWidth="3.600" />
      </svg>
    </Task>
    <Task open>
      <svg viewBox="0 0 36 36" className="h-[37px] w-[37px]">
        <rect x="1" y="1" width="34" height="34" fill="#b40707" stroke="#b40707" strokeWidth="2" strokeDasharray="2 2" />
        <path d="M8 29L13 8H24M10 17H20M19 18H29L19 29H28" fill="none" stroke="#fff" strokeWidth="4.200" />
      </svg>
    </Task>
    <Task open>
      <span className="relative flex h-[34px] w-[36px] justify-end">
        <span className="flex h-full w-[28px] flex-col overflow-hidden rounded-[2px]">
          <span className="flex-1 bg-[#41a5ee]" />
          <span className="flex-1 bg-[#2b7cd3]" />
          <span className="flex-1 bg-[#185abd]" />
          <span className="flex-1 bg-[#103f91]" />
        </span>
        <span className="absolute top-[7px] left-0 flex h-[20px] w-[19px] items-center justify-center rounded-[2px] bg-[#185abd] text-[14px] font-bold leading-none text-white">
          W
        </span>
      </span>
    </Task>
    <div className="ml-auto flex h-full items-center text-[#f0f0f0]">
      <svg viewBox="0 0 24 26" className="h-[26px] w-[24px]">
        <circle cx="16.500" cy="6" r="4.800" fill="none" stroke="#eee" strokeWidth="1.900" />
        <circle cx="7" cy="15" r="4" fill="none" stroke="#eee" strokeWidth="1.900" />
        <path d="M1 25.500C1 18 13 18 13 25.500M12 12C17 9 23 11 23 16" fill="none" stroke="#eee" strokeWidth="1.900" />
      </svg>
      <svg viewBox="0 0 20 10" className="ml-[36px] h-[11px] w-[19px]">
        <path d="M0.500 9.500L10 1L19.500 9.500" fill="none" stroke="#eee" strokeWidth="1.500" />
      </svg>
      <svg viewBox="0 0 27 22" className="ml-[16px] h-[22px] w-[27px]">
        <path d="M7 2H26V16.500H5.500M14.500 17V20.500M10 21H19" fill="none" stroke="#e4e4e4" strokeWidth="1.500" />
        <path d="M1 1.500H7V10H1ZM1 5H7M4 10V21" fill="none" stroke="#e4e4e4" strokeWidth="1.500" />
      </svg>
      <div className="mb-[2px] ml-[10px] flex w-[106px] flex-col items-center text-[18.500px] leading-[30px] tracking-[-0.3px]">
        <span>16:45</span>
        <span>18.09.2019</span>
      </div>
      <svg viewBox="0 0 27 26" className="ml-[23px] h-[26px] w-[27px]">
        <path d="M1 1H26V20H18L13.500 25L9 20H1Z" fill="none" stroke="#eee" strokeWidth="1.500" />
      </svg>
      <span className="ml-[30px] h-full w-[2px] bg-[#6c6f73]" />
      <span className="w-[8px]" />
    </div>
  </div>
);

export default function App() {
  return (
    <div className="flex h-[1540px] w-[2721px] flex-col overflow-hidden bg-white font-['Open_Sans',sans-serif]">
      <TabStrip />
      <Toolbar />
      <Bookmarks />
      <main className="flex h-[1311px] shrink-0 overflow-hidden bg-white pl-[894px]">
        <Sidebar />
        <div className="ml-[13px] w-[699px]">
          <Alerts />
          <div className="mt-[15px]">
            <Levels />
          </div>
        </div>
        <ScrollBar />
      </main>
      <Taskbar />
    </div>
  );
}
